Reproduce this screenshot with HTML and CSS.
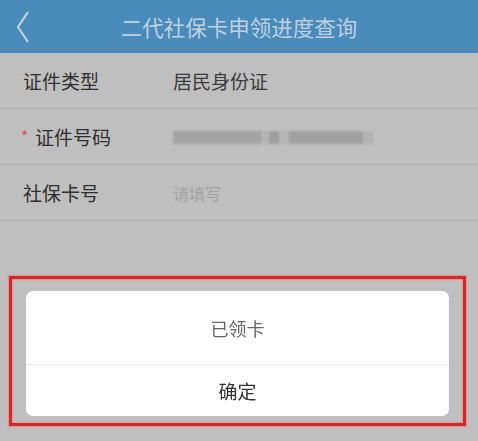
FILE: index.html
```html
<!DOCTYPE html>
<html lang="zh-CN">
<head>
<meta charset="utf-8">
<link rel="stylesheet" href="styles.css">
</head>
<body>
<header class="topbar">
  <span class="back"><svg width="14" height="32" viewBox="0 0 14 32"><path d="M12 1 L2 16 L12 31" fill="none" stroke="#c3d6e6" stroke-width="2"/></svg></span>
  <h1 class="title">二代社保卡申领进度查询</h1>
</header>
<main class="form">
  <div class="row">
    <span class="label">证件类型</span>
    <span class="value">居民身份证</span>
  </div>
  <div class="row">
    <span class="label"><span class="req">*</span>证件号码</span>
    <span class="value"><span class="blur"></span></span>
  </div>
  <div class="row">
    <span class="label">社保卡号</span>
    <span class="value placeholder">请填写</span>
  </div>
</main>
<div class="mask">
  <div class="highlight">
    <div class="dialog">
      <div class="msg">已领卡</div>
      <div class="btn">确定</div>
    </div>
  </div>
</div>
</body>
</html>
```
FILE: styles.css
```css
html, body {
  margin: 0;
  padding: 0;
}
body {
  width: 478px;
  height: 441px;
  background: #bfbfbf;
  font-family: "Noto Sans CJK SC", "Noto Sans", sans-serif;
  overflow: hidden;
}
.topbar {
  height: 53px;
  background: #4a8bb9;
  display: flex;
  align-items: center;
  position: relative;
}
.back {
  display: flex;
  padding-left: 16px;
  width: 30px;
}
.title {
  margin: 0;
  flex: 1;
  text-align: center;
  font-size: 21.5px;
  font-weight: normal;
  color: #bdd1e3;
  padding-right: 46px;
  letter-spacing: 0;
}
.form {
  display: flex;
  flex-direction: column;
}
.row {
  height: 55px;
  border-bottom: 1px solid #b2b2b2;
  display: flex;
  align-items: center;
}
.label {
  width: 150px;
  padding-left: 23px;
  font-size: 19px;
  color: #2f2f2f;
  position: relative;
}
.req {
  color: #d9534f;
  font-size: 16px;
  position: absolute;
  left: 21px;
  top: 1px;
}
.row:nth-child(2) .label {
  padding-left: 35px;
  width: 138px;
}
.value {
  font-size: 19px;
  color: #3b3b3b;
}
.placeholder {
  font-size: 16px;
  color: #a4a4a4;
}
.blur {
  display: block;
  width: 200px;
  height: 13px;
  background: linear-gradient(90deg, #a3a3a3 0 88px, #b5b5b5 88px 96px, #9f9f9f 96px 106px, #b5b5b5 106px 116px, #a1a1a1 116px 190px, #b3b3b3 190px);
  filter: blur(1px);
  margin-top: 2px;
}
.mask {
  position: fixed;
  left: 0;
  top: 0;
  right: 0;
  bottom: 0;
  display: flex;
  align-items: flex-end;
  padding: 0 12px 15px 9px;
}
.highlight {
  flex: 1;
  border: 3px solid #d4282b;
  box-shadow: 0 0 1px 1px rgba(240, 130, 130, 0.7), inset 0 0 1px 1px rgba(240, 130, 130, 0.7);
  padding: 12px 14px 7px 14px;
}
.dialog {
  background: #fff;
  border-radius: 7px;
  overflow: hidden;
}
.msg {
  height: 73px;
  display: flex;
  align-items: center;
  justify-content: center;
  font-size: 18px;
  color: #666;
  border-bottom: 1px solid #e6e6e6;
}
.btn {
  height: 51px;
  display: flex;
  align-items: center;
  justify-content: center;
  font-size: 19px;
  color: #333;
}
```
